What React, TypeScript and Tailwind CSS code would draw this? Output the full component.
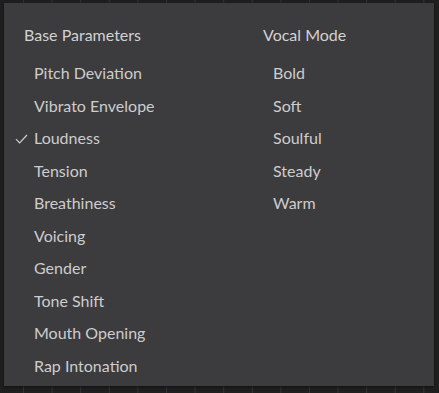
import React from 'react';

const baseParams = [
  'Pitch Deviation',
  'Vibrato Envelope',
  'Loudness',
  'Tension',
  'Breathiness',
  'Voicing',
  'Gender',
  'Tone Shift',
  'Mouth Opening',
  'Rap Intonation',
];

const vocalModes = ['Bold', 'Soft', 'Soulful', 'Steady', 'Warm'];

const Check = () => (
  <svg width="13" height="10" viewBox="0 0 13 10" fill="none" className="mt-[1px]">
    <path d="M1 5.2 L4.6 8.8 L12 1" stroke="#cfcfcf" strokeWidth="1.2" />
  </svg>
);

const MenuColumn = ({ title, items, checked, width }: { title: string; items: string[]; checked?: string; width: string }) => (
  <div className={`flex flex-col ${width}`}>
    <div className="h-8 flex items-center pl-[9px] text-[#d2d2d2]">{title}</div>
    <div className="flex flex-col mt-[6px]">
      {items.map((item) => (
        <div key={item} className="h-[32.5px] flex items-center text-[#cdcdcd]">
          <span className="w-[19px] flex items-center">{item === checked && <Check />}</span>
          <span>{item}</span>
        </div>
      ))}
    </div>
  </div>
);

export default function App() {
  return (
    <div className="w-[439px] h-[393px] overflow-hidden bg-[#1f1f1f] bg-[linear-gradient(to_right,#333335_1px,transparent_1px)] bg-[size:28.6px_100%] bg-[position:23px_0] font-['Source_Sans_Pro','Lato',sans-serif] text-[16px] pt-[3px] pl-[4px]">
      {/* Menu panel */}
      <div className="w-[430px] h-[383px] bg-[#3c3b3e] shadow-[0_1px_3px_rgba(0,0,0,0.5)] pt-4 pl-[11px] flex">
        <MenuColumn title="Base Parameters" items={baseParams} checked="Loudness" width="w-[239px]" />
        <MenuColumn title="Vocal Mode" items={vocalModes} width="w-[170px]" />
      </div>
    </div>
  );
}
